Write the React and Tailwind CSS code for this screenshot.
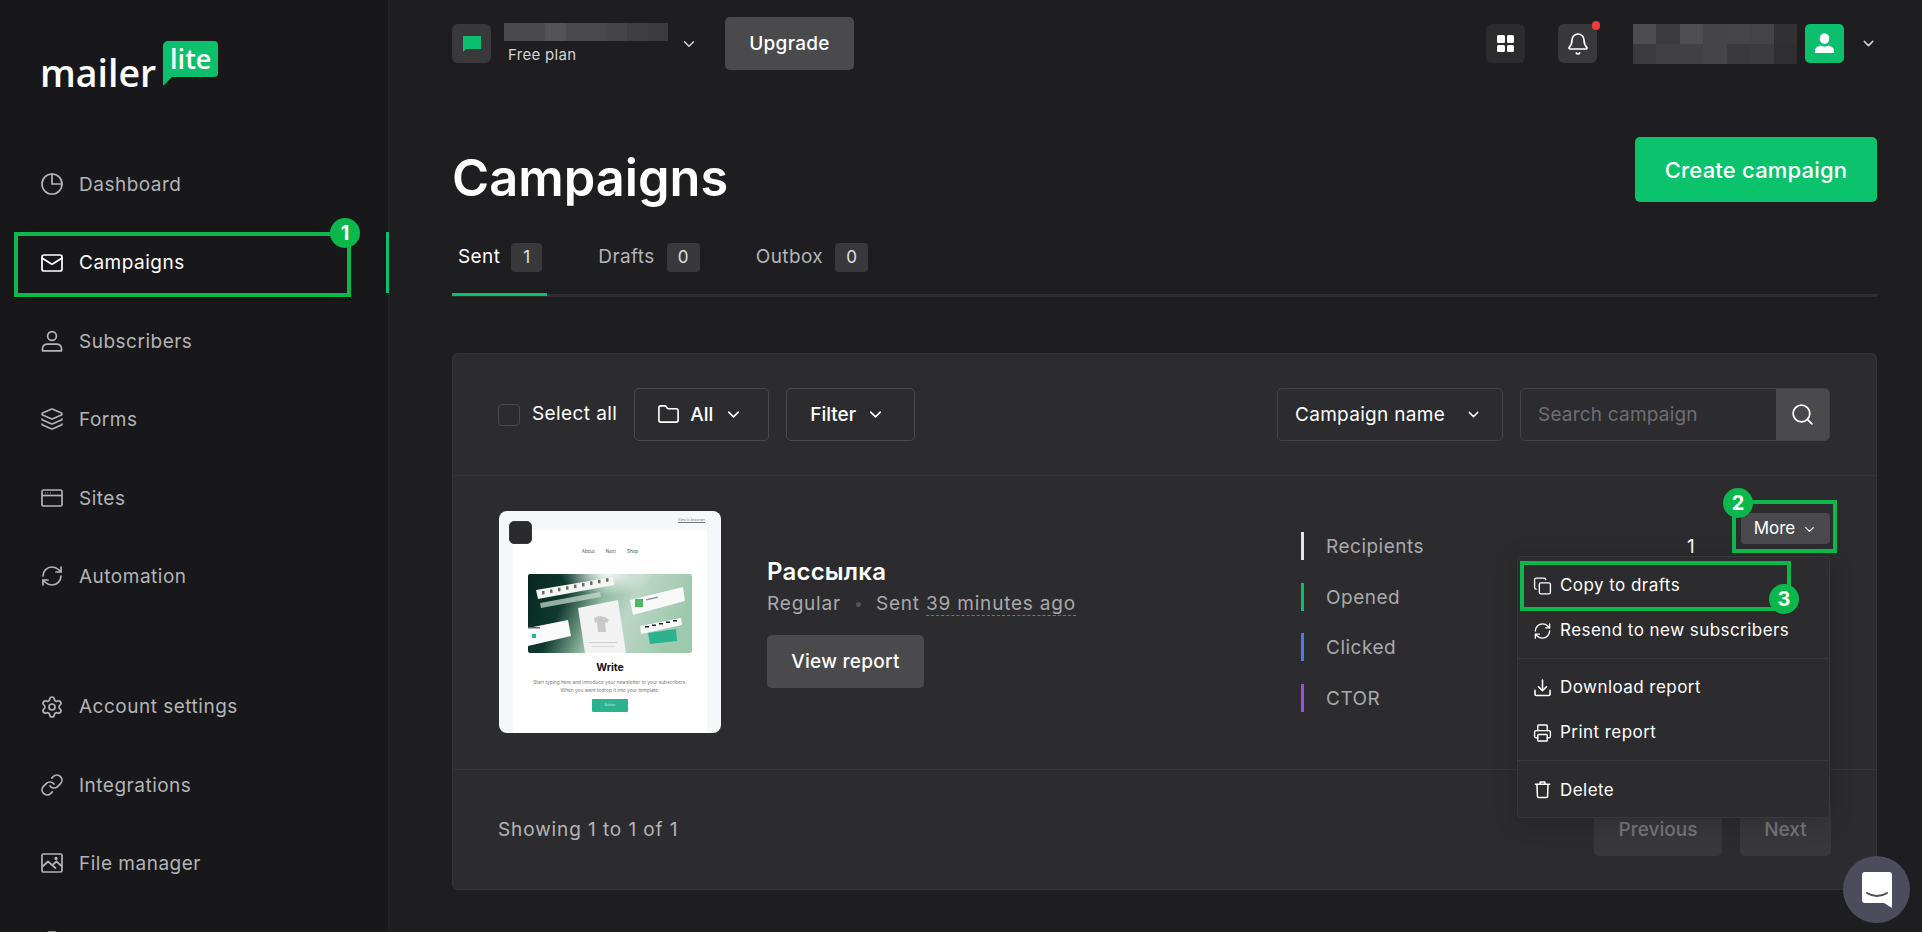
import React from "react";
import {
  Mail, Layers, RefreshCw, Settings, Link, ChevronDown, Folder, Search, Copy, Printer, Bell, Clipboard,
} from "lucide-react";

const I = "stroke-[1.7]";

function PieIcon() {
  return (
    <svg viewBox="0 0 24 24" className="w-[24px] h-[24px]" fill="none" stroke="currentColor" strokeWidth="1.7" strokeLinecap="round" strokeLinejoin="round">
      <circle cx="12" cy="12" r="10" />
      <path d="M12 2v10h10" />
    </svg>
  );
}
function UserIcon() {
  return (
    <svg viewBox="0 0 24 24" className="w-[24px] h-[24px]" fill="none" stroke="currentColor" strokeWidth="1.7" strokeLinejoin="round">
      <circle cx="12" cy="7" r="4.4" />
      <path d="M2.500 20.200c0-3.400 2.600-5 5.400-5h8.200c2.800 0 5.400 1.600 5.400 5v1.600h-19z" />
    </svg>
  );
}
function SiteIcon() {
  return (
    <svg viewBox="0 0 24 24" className="w-[24px] h-[24px]" fill="none" stroke="currentColor" strokeWidth="1.7" strokeLinejoin="round">
      <rect x="2" y="4" width="20" height="16" rx="1.5" />
      <path d="M2 9.500h20" />
      <path d="M5 6.800h.6M7.500 6.800h.6M10 6.800h.6" strokeWidth="1.3" />
    </svg>
  );
}
function ImageIcon() {
  return (
    <svg viewBox="0 0 24 24" className="w-[24px] h-[24px]" fill="none" stroke="currentColor" strokeWidth="1.7" strokeLinejoin="round">
      <rect x="2" y="3" width="20" height="18" rx="1.5" />
      <path d="M2 16l6-5.500 8 7M13 13.500l3.500-3 5.500 5" />
      <circle cx="16" cy="7.500" r=".8" />
    </svg>
  );
}

function NavItem({ icon, label, active }) {
  return (
    <div className={`h-[78.4px] flex items-center gap-[15px] pl-[40px] shrink-0 ${active ? "text-white" : "text-[#b4b4b6]"}`}>
      <span className="w-[24px] flex justify-center">{icon}</span>
      <span className="text-[19px] tracking-[0.5px] pt-[2px]">{label}</span>
    </div>
  );
}

function Pixels({ rows, className }) {
  return (
    <div className={`flex flex-col ${className}`}>
      {rows.map((r, i) => (
        <div key={i} className="flex flex-1">
          {r.map((c, j) => (
            <div key={j} className="flex-1" style={{ background: c }} />
          ))}
        </div>
      ))}
    </div>
  );
}

function Tab({ label, n, active }) {
  return (
    <div className={`flex items-center pl-[6px] pr-[5px] h-[53px] pb-[21px] -mb-[3px] border-b-[3px] ${active ? "gap-[11px] border-[#0cbf6c] text-white" : "gap-[12px] border-transparent text-[#b4b4b6]"}`}>
      <span className="text-[19px] tracking-[0.4px]">{label}</span>
      <span className={`h-[29px] rounded-[4px] bg-[#39393b] text-[#e0e0e0] text-[17px] flex items-center justify-center ${active ? "w-[31px]" : "w-[33px]"}`}>{n}</span>
    </div>
  );
}

function Stat({ color, label }) {
  return (
    <div className="h-[50.5px] flex items-start gap-[22px]">
      <span className={`w-[3px] h-[28px] ${color}`} />
      <span className="text-[19px] text-[#a9a9ab] leading-[28px] pt-[1px] tracking-[0.5px]">{label}</span>
    </div>
  );
}

function MenuItem({ icon, label, nudge = "" }) {
  return (
    <div className="h-[44.5px] flex items-center gap-[8px] pl-[15px] text-white">
      <span className="w-[19px] flex justify-center">{icon}</span>
      <span className={`text-[17px] tracking-[0.45px] ${nudge}`}>{label}</span>
    </div>
  );
}

function Num({ n, className }) {
  return (
    <span className={`absolute w-[30px] h-[30px] rounded-full bg-[#0cb74b] text-white font-bold text-[20px] flex items-center justify-center ${className}`}>{n}</span>
  );
}

function Thumb() {
  return (
    <div className="relative w-[222px] h-[222px] rounded-[8px] bg-[#f6f7fb] overflow-hidden shrink-0 flex flex-col items-stretch">
      <div className="h-[19px] flex items-center justify-end pr-[16px] text-[3.6px] text-[#777] underline">View in browser</div>
      <div className="flex-1 mx-[14px] bg-white flex flex-col items-center">
        <div className="flex gap-[11px] mt-[19px] text-[4.6px] text-[#555]">
          <span>About</span><span>Next</span><span>Shop</span>
        </div>
        <svg viewBox="0 0 164 79" className="w-[164px] h-[79px] mt-[18px] rounded-[2px]">
          <defs>
            <linearGradient id="tg" x1="0" y1="0" x2="1" y2="0.2">
              <stop offset="0" stopColor="#07251e" />
              <stop offset="0.27" stopColor="#0f3a2e" />
              <stop offset="0.5" stopColor="#92baa5" />
              <stop offset="0.68" stopColor="#bcd6c6" />
              <stop offset="1" stopColor="#9fc9ad" />
            </linearGradient>
            <radialGradient id="tw" cx="0.48" cy="0" r="0.28">
              <stop offset="0" stopColor="#fff" stopOpacity="0.9" />
              <stop offset="1" stopColor="#fff" stopOpacity="0" />
            </radialGradient>
          </defs>
          <rect width="164" height="79" fill="url(#tg)" />
          <rect width="164" height="79" fill="url(#tw)" />
          <polygon points="8,16 85,3 86,11 10,25" fill="#f4f6f4" />
          {[14, 22, 30, 38, 46, 54, 62, 70, 78].map((x, i) => (
            <rect key={x} x={x} y={17 - i * 1.6} width="2.5" height="3.5" fill="#6a6a6a" />
          ))}
          <polygon points="12,29 72,18 73,23 13,34" fill="#cfe0d6" opacity="0.7" />
          <polygon points="50,34 90,26 98,79 57,79" fill="#f1f2f1" />
          <path d="M66 44l5-2 6 1 4 3-2 3-2-1 1 10H70l-1-10-2 1z" fill="#c8c8c8" />
          <rect x="61" y="68" width="28" height="1" fill="#cfcfcf" />
          <rect x="63" y="72" width="24" height="1" fill="#d8d8d8" />
          <polygon points="0,54 40,46 43,62 0,72" fill="#fafafa" />
          <rect x="4" y="60" width="4" height="4" fill="#2cb28e" />
          <rect x="0" y="53" width="12" height="1.500" fill="#666" />
          <polygon points="102,26 155,13 157,27 105,41" fill="#f7f8f7" />
          <rect x="107" y="25" width="8" height="8" fill="#4cb962" />
          <rect x="118" y="25" width="12" height="1.500" fill="#999" transform="rotate(-12 118 25)" />
          <polygon points="112,52 153,44 154,51 113,60" fill="#f7f8f7" />
          {[117, 124, 131, 138, 145].map((x, i) => (
            <rect key={x} x={x} y={52 - i * 1.5} width="4" height="1.500" fill="#222" />
          ))}
          <polygon points="120,59 148,55 149,67 122,70" fill="#2cb28e" />
        </svg>
        <div className="mt-[8px] text-[10.5px] font-bold text-[#111] leading-[14px]">Write</div>
        <div className="mt-[3px] text-[4.8px] leading-[8px] text-[#777] text-center whitespace-nowrap">
          Start typing here and introduce your newsletter to your subscribers.<br />
          When you want todrop it into your template.
        </div>
        <div className="mt-[5px] w-[36px] h-[13px] bg-[#2cb28e] rounded-[1px] text-[3.6px] text-[#bfeee0] flex items-center justify-center">Button</div>
      </div>
      <span className="absolute left-[10px] top-[10px] w-[23px] h-[23px] rounded-[5px] bg-[#2b2b2d] border border-[#39393b]" />
    </div>
  );
}

export default function App() {
  return (
    <div className="relative flex w-[1922px] h-[932px] overflow-hidden bg-[#1e1e20] text-white font-['Inter',sans-serif]">
      <aside className="w-[389px] h-[932px] shrink-0 bg-[#18181b] border-r border-[#232326] flex flex-col overflow-hidden">
        <div className="h-[145px] shrink-0 pl-[40px] pt-[41px] flex items-start gap-[7px]">
          <span className="font-['Open_Sans',sans-serif] font-semibold text-[37.5px] leading-[38px] mt-[13px]">mailer</span>
          <div className="relative w-[55px] h-[45px] flex justify-center">
            <svg viewBox="0 0 55 45" className="absolute inset-0 w-[55px] h-[45px]">
              <path d="M5 0h46a4 4 0 0 1 4 4v28a4 4 0 0 1-4 4H9L0 45V5a5 5 0 0 1 5-5z" fill="#0cbf6c" />
            </svg>
            <span className="relative font-['Open_Sans',sans-serif] font-semibold text-[27px] leading-[27px] mt-[4px]">lite</span>
          </div>
        </div>
        <NavItem icon={<PieIcon />} label="Dashboard" />
        <NavItem active icon={<Mail size={24} className={I} />} label="Campaigns" />
        <NavItem icon={<UserIcon />} label="Subscribers" />
        <NavItem icon={<Layers size={24} className={I} />} label="Forms" />
        <NavItem icon={<SiteIcon />} label="Sites" />
        <NavItem icon={<RefreshCw size={24} className={I} />} label="Automation" />
        <div className="h-[52px] shrink-0" />
        <NavItem icon={<Settings size={24} className={I} />} label="Account settings" />
        <NavItem icon={<Link size={24} className={I} />} label="Integrations" />
        <NavItem icon={<ImageIcon />} label="File manager" />
        <NavItem icon={<Clipboard size={24} className={I} />} label="" />
      </aside>

      <main className="flex-1 min-w-0 pl-[63px] pr-[45px] flex flex-col">
        <header className="h-[87px] shrink-0 flex items-center">
          <div className="w-[39px] h-[39px] rounded-[6px] bg-[#39393b] flex items-center justify-center">
            <svg viewBox="0 0 20 20" className="w-[20px] h-[20px]"><path d="M1 2h18v13H4l-3 3z" fill="#0cbf6c" /></svg>
          </div>
          <div className="ml-[13px] w-[164px]">
            <Pixels className="h-[18px]" rows={[["#4a4a4c", "#4a4a4c", "#545456", "#4a4a4c", "#4a4a4c", "#454547", "#3f3f41", "#3b3b3d"]]} />
            <div className="text-[15px] leading-[20px] text-[#d4d4d4] pl-[4px] mt-[4px] tracking-[0.3px]">Free plan</div>
          </div>
          <ChevronDown size={18} className="ml-[12px] text-[#d4d4d4]" />
          <button className="ml-[27px] w-[129px] h-[53px] pt-[2px] rounded-[5px] bg-[#4a4a4c] text-[19px] font-medium tracking-[0.3px]">Upgrade</button>
          <div className="flex-1" />
          <div className="w-[39px] h-[39px] rounded-[6px] bg-[#2c2c2e] grid grid-cols-2 gap-[2px] p-[11px]">
            <span className="rounded-[1.5px] bg-white" /><span className="rounded-[1.5px] bg-white" />
            <span className="rounded-[1.5px] bg-white" /><span className="rounded-[1.5px] bg-white" />
          </div>
          <div className="relative ml-[33px] w-[39px] h-[39px] rounded-[6px] bg-[#39393b] flex items-center justify-center">
            <Bell size={24} className="stroke-[1.7]" />
            <span className="absolute -top-[3px] -right-[3px] w-[8px] h-[9px] rounded-full bg-[#ed3b3f]" />
          </div>
          <Pixels className="ml-[36px] w-[164px] h-[40px]" rows={[
            ["#4d4d4f", "#3c3c3e", "#4f4f51", "#454547", "#464648", "#444446", "#313133"],
            ["#3b3b3d", "#414143", "#414143", "#454547", "#3a3a3c", "#3c3c3e", "#2f2f31"],
          ]} />
          <div className="ml-[8px] w-[39px] h-[39px] rounded-[5px] bg-[#0cbf6c] flex items-center justify-center">
            <svg viewBox="0 0 24 24" className="w-[23px] h-[23px]" fill="#fff">
              <ellipse cx="12" cy="6.800" rx="5" ry="5.600" />
              <path d="M2 22v-2.500c0-3 3-4.500 6-5.300 2 1.500 6 1.500 8 0 3 .8 6 2.300 6 5.300V22z" />
            </svg>
          </div>
          <ChevronDown size={17} className="ml-[16px] text-[#d4d4d4]" />
        </header>

        <div className="mt-[50px] h-[65px] shrink-0 flex items-start justify-between">
          <h1 className="mt-[11px] text-[50.5px] leading-[60px] font-semibold">Campaigns</h1>
          <button className="w-[242px] h-[65px] pt-[2px] rounded-[5px] bg-[#0cc36d] text-[22px] font-medium tracking-[0.2px]">Create campaign</button>
        </div>

        <div className="mt-[41px] h-[54px] shrink-0 flex gap-[45px] border-b-[3px] border-[#2f2f31]">
          <Tab active label="Sent" n="1" />
          <Tab label="Drafts" n="0" />
          <Tab label="Outbox" n="0" />
        </div>

        <section className="mt-[56px] h-[537px] shrink-0 rounded-[6px] bg-[#2c2c2e] border border-[#353537] flex flex-col">
          <div className="h-[122px] shrink-0 border-b border-[#363638] pl-[45px] pr-[46px] flex items-center">
            <span className="w-[22px] h-[22px] rounded-[4px] border border-[#4a4a4c]" />
            <span className="ml-[12px] text-[19px] tracking-[0.4px]">Select all</span>
            <div className="ml-[17px] w-[135px] h-[53px] rounded-[5px] border border-[#4a4a4c] flex items-center pl-[22px]">
              <Folder size={23} className="stroke-[1.7]" />
              <span className="ml-[10px] text-[19px] font-medium pt-[1px]">All</span>
              <ChevronDown size={19} className="ml-[11px]" />
            </div>
            <div className="ml-[17px] w-[129px] h-[53px] rounded-[5px] border border-[#4a4a4c] flex items-center pl-[23px]">
              <span className="text-[19px] font-medium pt-[1px]">Filter</span>
              <ChevronDown size={19} className="ml-[10px]" />
            </div>
            <div className="flex-1" />
            <div className="w-[226px] h-[53px] rounded-[5px] border border-[#444446] flex items-center pl-[17px]">
              <span className="text-[19px] tracking-[0.3px] pt-[1px]">Campaign name</span>
              <ChevronDown size={17} className="ml-[20px]" />
            </div>
            <div className="ml-[17px] w-[310px] h-[53px] rounded-[5px] border border-[#444446] flex items-center overflow-hidden">
              <span className="flex-1 pl-[17px] text-[19px] text-[#6f6f71] pt-[1px] tracking-[0.2px]">Search campaign</span>
              <span className="w-[53px] h-full bg-[#4a4a4c] flex items-center justify-center"><Search size={25} className="stroke-[1.7]" /></span>
            </div>
          </div>

          <div className="relative h-[294px] shrink-0 border-b border-[#363638] pt-[35px] pl-[46px] pr-[45px] flex items-start">
            <Thumb />
            <div className="ml-[46px] w-[534px] pt-[46px]">
              <div className="text-[24px] leading-[30px] font-semibold tracking-[0.2px]">Рассылка</div>
              <div className="mt-[3px] h-[28px] text-[19px] leading-[28px] text-[#a9a9ab] flex items-center tracking-[0.8px]">
                Regular
                <span className="mx-[15px] w-[5px] h-[5px] rounded-full bg-[#555557]" />
                Sent&nbsp;<span className="border-b border-dashed border-[#77777a] leading-[23px]">39 minutes ago</span>
              </div>
              <button className="mt-[17px] w-[157px] h-[53px] pt-[2px] rounded-[5px] bg-[#4a4a4c] text-[19px] font-medium tracking-[0.3px]">View report</button>
            </div>
            <div className="w-[400px] pt-[21px] relative">
              <Stat color="bg-[#e5e5e5]" label="Recipients" />
              <Stat color="bg-[#0cbf6c]" label="Opened" />
              <Stat color="bg-[#4a7be8]" label="Clicked" />
              <Stat color="bg-[#9b4fe0]" label="CTOR" />
              <span className="absolute left-[386px] top-[22px] text-[19px] leading-[28px]">1</span>
            </div>
            <button className="absolute right-[46px] top-[37px] w-[89px] h-[31px] pt-[1px] rounded-[4px] bg-[#4a4a4c] text-[17px] flex items-center justify-center gap-[7px]">
              More <ChevronDown size={15} />
            </button>
          </div>

          <div className="flex-1 pl-[45px] pr-[45px] flex items-center">
            <span className="text-[19px] text-[#b4b4b6] tracking-[0.9px] pt-[1px]">Showing 1 to 1 of 1</span>
            <div className="flex-1" />
            <button className="w-[128px] h-[53px] pt-[2px] rounded-[5px] bg-[#38383a] text-[19px] font-medium text-[#757577]">Previous</button>
            <button className="ml-[18px] w-[91px] h-[53px] pt-[2px] rounded-[5px] bg-[#38383a] text-[19px] font-medium text-[#757577]">Next</button>
          </div>
        </section>
      </main>

      {/* dropdown */}
      <div className="absolute left-[1517px] top-[556px] w-[313px] h-[262px] rounded-[4px] bg-[#2c2c2e] border border-[#38383a] shadow-[0_4px_24px_rgba(0,0,0,0.18)] flex flex-col pt-[7px]">
        <MenuItem nudge="pb-[2px]" icon={<Copy size={20} className="stroke-[1.7]" />} label="Copy to drafts" />
        <MenuItem icon={<RefreshCw size={20} className="stroke-[1.7]" />} label="Resend to new subscribers" />
        <div className="mt-[5px] h-[1px] bg-[#38383a]" />
        <div className="mt-[7px]"><MenuItem nudge="pb-[2px]" icon={
          <svg viewBox="0 0 24 24" className="w-[20px] h-[20px]" fill="none" stroke="currentColor" strokeWidth="2" strokeLinecap="round" strokeLinejoin="round">
            <path d="M12 2v13M7 10.500l5 5 5-5M2.500 15v5a1.500 1.500 0 0 0 1.500 1.500h16a1.500 1.500 0 0 0 1.500-1.500v-5" />
          </svg>
        } label="Download report" /></div>
        <MenuItem icon={<Printer size={20} className="stroke-[1.8]" />} label="Print report" />
        <div className="mt-[5px] h-[1px] bg-[#38383a]" />
        <div className="mt-[6px]"><MenuItem nudge="pt-[2px]" icon={
          <svg viewBox="0 0 24 24" className="w-[21px] h-[21px]" fill="none" stroke="currentColor" strokeWidth="1.9" strokeLinecap="round" strokeLinejoin="round">
            <path d="M3 5.500h18M9 5.500V2.500h6v3M5 5.500l.6 15a1.500 1.500 0 0 0 1.500 1.500h9.800a1.500 1.500 0 0 0 1.500-1.500l.6-15" />
          </svg>
        } label="Delete" /></div>
      </div>

      {/* annotations */}
      <div className="absolute left-[14px] top-[232px] w-[337px] h-[65px] border-[4px] border-[#0cb74b]" />
      <Num n="1" className="left-[330px] top-[218px]" />
      <div className="absolute left-[386px] top-[232px] w-[3px] h-[61px] bg-[#0cbf6c]" />
      <div className="absolute left-[1732px] top-[500px] w-[105px] h-[53px] border-[4px] border-[#0cb74b]" />
      <Num n="2" className="left-[1723px] top-[488px]" />
      <div className="absolute left-[1520px] top-[561px] w-[271px] h-[50px] border-[4px] border-[#0cb74b]" />
      <Num n="3" className="left-[1769px] top-[584px]" />

      {/* chat launcher */}
      <div className="absolute left-[1843px] top-[856px] w-[67px] h-[67px] rounded-full bg-[#4c4c5c] flex items-center justify-center">
        <svg viewBox="0 0 30 36" className="w-[30px] h-[36px]">
          <path d="M3 0h24a3 3 0 0 1 3 3v33l-8-5H3a3 3 0 0 1-3-3V3a3 3 0 0 1 3-3z" fill="#fff" />
          <path d="M5 21c6 4 14 4 20 0" fill="none" stroke="#4c4c5c" strokeWidth="2" strokeLinecap="round" />
        </svg>
      </div>
    </div>
  );
}
